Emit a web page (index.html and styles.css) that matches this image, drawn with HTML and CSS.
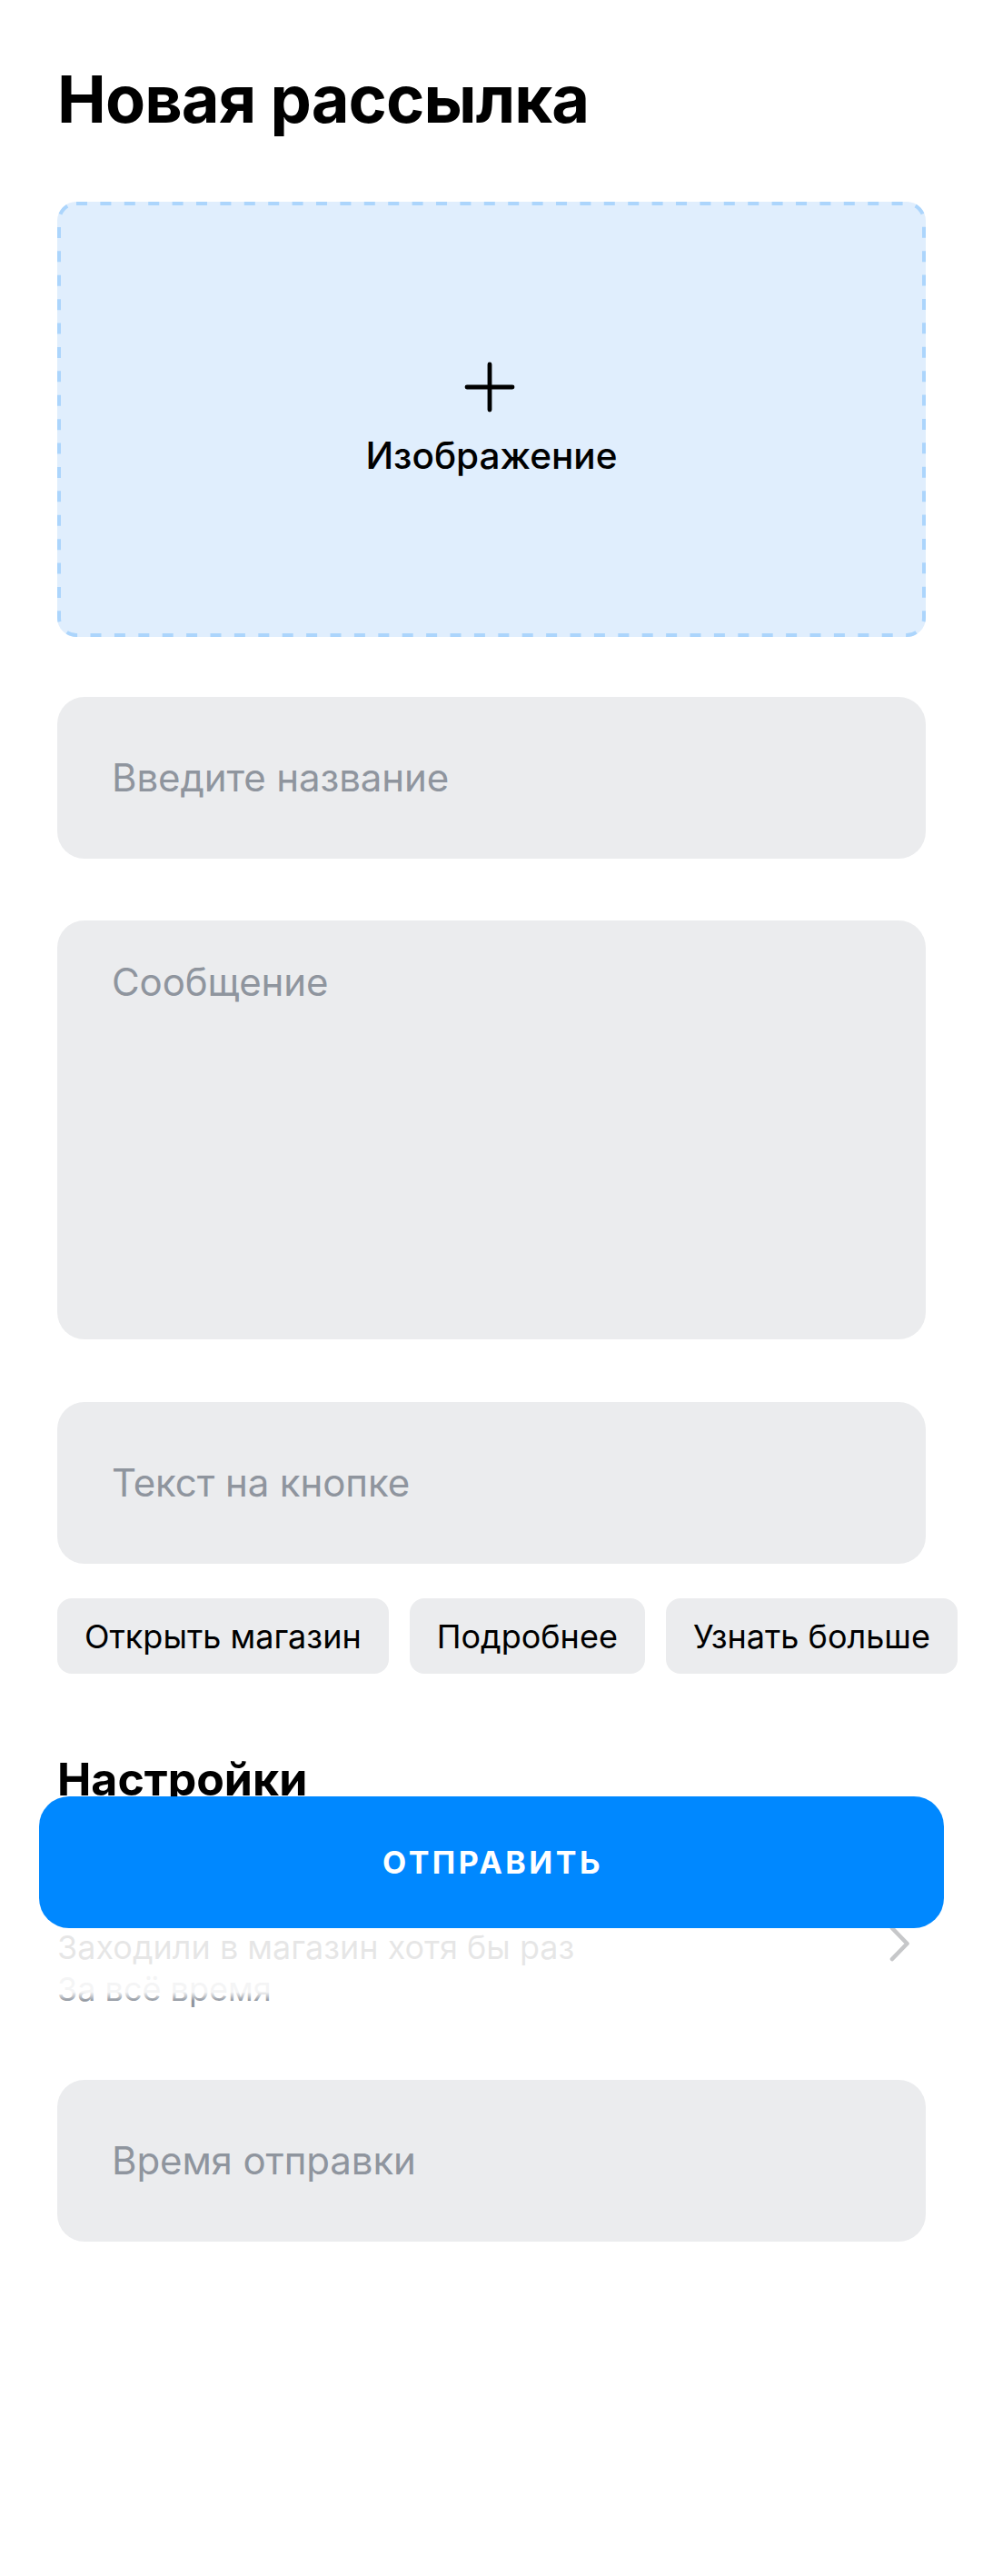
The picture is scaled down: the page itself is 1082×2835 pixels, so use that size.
FILE: index.html
```html
<!DOCTYPE html>
<html lang="ru">
<head>
<meta charset="utf-8">
<title>Новая рассылка</title>
<link rel="stylesheet" href="styles.css">
</head>
<body>
<main class="page">
  <h1 class="title">Новая рассылка</h1>

  <div class="upload">
    <svg class="upload-border" width="956" height="479" viewBox="0 0 956 479" aria-hidden="true">
      <rect x="2" y="2" width="952" height="475" rx="19" ry="19" fill="none" stroke="#acd5fc" stroke-width="4" stroke-dasharray="12 14.4"/>
    </svg>
    <svg class="plus" width="56" height="56" viewBox="0 0 56 56" aria-hidden="true">
      <path d="M28 3 V53 M3 28 H53" stroke="#000" stroke-width="4.8" stroke-linecap="round" fill="none"/>
    </svg>
    <span class="upload-label">Изображение</span>
  </div>

  <div class="field field-name"><span class="placeholder">Введите название</span></div>
  <div class="field field-message"><span class="placeholder">Сообщение</span></div>
  <div class="field field-button"><span class="placeholder">Текст на кнопке</span></div>

  <div class="chips">
    <span class="chip">Открыть магазин</span>
    <span class="chip">Подробнее</span>
    <span class="chip">Узнать больше</span>
  </div>

  <h2 class="section-title">Настройки</h2>

  <div class="list-item">
    <div class="list-text">
      <div class="list-title">Заходили в магазин хотя бы раз</div>
      <div class="list-sub">За всё время</div>
    </div>
    <svg class="chevron" width="24" height="40" viewBox="0 0 24 40" aria-hidden="true">
      <path d="M4 3 L20.5 20 L4 37" stroke="#c6c7c9" stroke-width="4.6" stroke-linecap="round" stroke-linejoin="round" fill="none"/>
    </svg>
  </div>

  <div class="field field-time"><span class="placeholder">Время отправки</span></div>
</main>

<div class="footer">
  <button class="send" type="button">Отправить</button>
  <div class="footer-fade"></div>
</div>
</body>
</html>
```

FILE: styles.css
```css
html, body {
  margin: 0;
  padding: 0;
  background: #ffffff;
}

body {
  position: relative;
  min-height: 2835px;
  font-family: "Inter", "Noto Sans", "Liberation Sans", sans-serif;
  color: #000000;
}

.page {
  padding: 66px 63px 0;
  display: flex;
  flex-direction: column;
}

.title {
  margin: 0;
  font-size: 72px;
  line-height: 86px;
  font-weight: 700;
  letter-spacing: -0.9px;
}

.upload {
  position: relative;
  margin-top: 70px;
  height: 479px;
  border-radius: 21px;
  background: #e0eefd;
  display: flex;
  flex-direction: column;
  align-items: center;
  justify-content: center;
  gap: 24px;
}

.upload-border {
  position: absolute;
  inset: 0;
}

.plus {
  display: block;
  margin-left: -4px;
}

.upload-label {
  font-size: 40.5px;
  line-height: 48px;
  font-weight: 500;
}

.field {
  height: 178px;
  border-radius: 30px;
  background: #ebecee;
  box-sizing: border-box;
  padding: 0 60px;
  display: flex;
  align-items: center;
}

.placeholder {
  font-size: 42px;
  line-height: 52px;
  color: #8f959e;
  font-weight: 400;
  letter-spacing: -0.1px;
}

.field-name { margin-top: 66px; }

.field-message {
  margin-top: 68px;
  height: 461px;
  align-items: flex-start;
  padding-top: 42px;
}

.field-button { margin-top: 69px; }

.chips {
  margin-top: 38px;
  display: flex;
  gap: 23px;
  white-space: nowrap;
}

.chip {
  flex-shrink: 0;
  height: 83px;
  box-sizing: border-box;
  padding: 0 30px;
  border-radius: 16px;
  background: #ebecee;
  display: flex;
  align-items: center;
  font-size: 36px;
  line-height: 44px;
  font-weight: 400;
  color: #000;
}

.section-title {
  margin: 86px 0 0;
  font-size: 50px;
  line-height: 60px;
  font-weight: 700;
}

.list-item {
  margin-top: 133px;
  display: flex;
  align-items: flex-start;
  justify-content: space-between;
}

.list-title {
  font-size: 36px;
  line-height: 44px;
  color: #000;
}

.list-sub {
  margin-top: 2px;
  font-size: 36px;
  line-height: 44px;
  color: #8f959e;
}

.chevron {
  position: relative;
  z-index: 3;
  margin-top: -2px;
  margin-right: 17px;
  flex-shrink: 0;
}

.field-time { margin-top: 78px; }

.footer {
  position: absolute;
  top: 1977px;
  left: 0;
  right: 0;
}

.send {
  position: relative;
  z-index: 5;
  display: block;
  margin: 0 43px;
  width: calc(100% - 86px);
  height: 145px;
  border: 0;
  border-radius: 33px;
  background: #0088ff;
  color: #ffffff;
  font-family: "Inter", "Noto Sans", "Liberation Sans", sans-serif;
  font-size: 34px;
  font-weight: 700;
  letter-spacing: 3.5px;
  text-transform: uppercase;
  padding: 0 0 0 3px;
}

.footer-fade {
  position: relative;
  z-index: 1;
  height: 80px;
  background: linear-gradient(to bottom, rgba(255,255,255,0.9) 0, rgba(255,255,255,0.9) 88%, rgba(255,255,255,0) 100%);
}
```
